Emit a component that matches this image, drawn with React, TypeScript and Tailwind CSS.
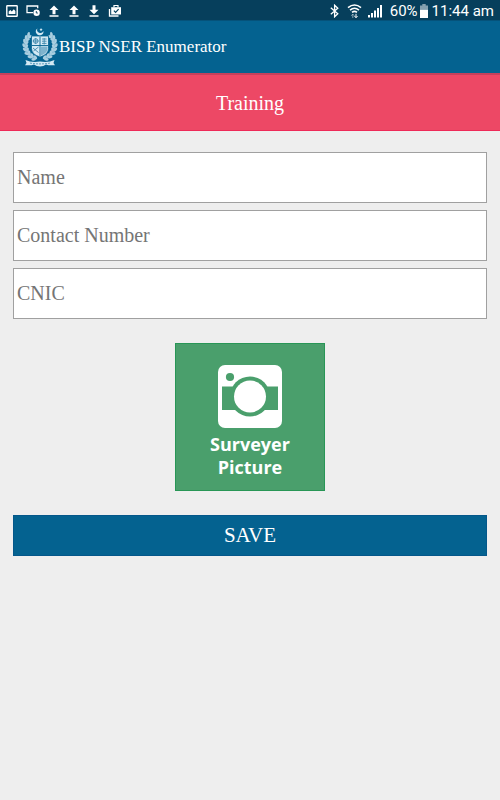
import React, {useState} from "react";

const StatusBar = () => (
  <div className="flex h-5 items-center justify-between bg-[#063f5c] px-1.5 pt-px font-['Roboto',sans-serif] text-white">
    <div className="flex items-center gap-2">
      <svg width="12" height="14" viewBox="0 0 12 14" fill="none" aria-hidden="true">
        <rect x="0.8" y="1.8" width="10.4" height="10.4" rx="0.5" stroke="white" strokeWidth="1.4" />
        <path d="M2.7 10V7.6l1.6-1.5 1.5 1.3 2-2.2 1.6 1.7V10z" fill="white" />
      </svg>
      <svg width="14" height="14" viewBox="0 0 14 14" fill="none" aria-hidden="true">
        <path d="M7 8.7H1V2h10.7v2.2" stroke="white" strokeWidth="1.3" />
        <circle cx="10.6" cy="8.7" r="3.2" fill="white" />
        <path d="M10.3 7v2h1.6" stroke="#063f5c" strokeWidth="0.9" />
      </svg>
      <ArrowIcon />
      <ArrowIcon />
      <ArrowIcon down />
      <svg width="14" height="14" viewBox="0 0 14 14" aria-hidden="true">
        <path d="M1.5 5v7h9" fill="none" stroke="white" strokeWidth="1.3" />
        <path d="M6 3.2V1.5h4v1.7" fill="none" stroke="white" strokeWidth="1.2" />
        <path d="M3.2 3.2H13v7.3H3.2z" fill="white" />
        <path d="M5.9 6.6l1.7 1.8 3-3.2" fill="none" stroke="#063f5c" strokeWidth="1.2" />
      </svg>
    </div>
    <div className="flex items-center">
      <svg width="9" height="14" viewBox="0 0 9 14" fill="none" aria-hidden="true">
        <path d="M0.8 3.8l7 6-3.2 3V1.2l3.2 3-7 6" stroke="white" strokeWidth="1.3" />
      </svg>
      <svg className="ml-2" width="15" height="16" viewBox="0 0 15 16" fill="none" aria-hidden="true">
        <path d="M1 4.6q6.5-5.2 13 0M3 7.100q4.500-3.600 9 0M5 9.400q2.500-2 5 0" stroke="white" strokeWidth="1.6" />
        <path d="M5.800 15v-3.600M4.300 12.700l1.500-1.600 1.500 1.600" stroke="white" strokeOpacity="0.5" />
        <path d="M9 10.800v3.800M7.500 13.100L9 14.700l1.500-1.600" stroke="white" />
      </svg>
      <svg className="ml-1.5" width="14" height="14" viewBox="0 0 14 14" fill="white" aria-hidden="true">
        <path d="M0 11h2v2.500H0zM3 9h2v4.500H3zM6 6.500h2v7H6zM9 4h2v9.500H9zM12 1h2v12.500h-2z" />
      </svg>
      <span className="ml-2 text-[15px] leading-5">60%</span>
      <svg className="ml-0.5" width="8" height="14" viewBox="0 0 8 14" fill="white" aria-hidden="true">
        <path d="M2.3 0h3.4v1.4H8v4.3H0V1.4h2.3z" opacity="0.5" />
        <path d="M0 5.7h8V14H0z" />
      </svg>
      <span className="ml-1 text-[15px] leading-5">11:44 am</span>
    </div>
  </div>
);

const ArrowIcon = ({down = false}: {down?: boolean}) => (
  <svg width="12" height="14" viewBox="0 0 12 14" fill="white" aria-hidden="true">
    <path
      d={
        down
          ? "M4.5 1.2h3v4.5h3L6 10.2 1.5 5.7h3zM1.5 11.3h9v1.4h-9z"
          : "M6 1.6l4.5 4.5h-3v4.2h-3V6.1h-3zM1.5 11.3h9v1.4h-9z"
      }
    />
  </svg>
);

const leaves = [
  [7.5, 7.5, 45], [5, 10.5, 35], [3.4, 14, 20], [2.8, 18, 5],
  [3.4, 22, -15], [5, 25.8, -35], [8, 29, -50], [11.6, 31.4, -65],
];

const Wreath = () => (
  <g>
    <path d="M8 7.500C1.500 14 2 27 13.500 31.500" fill="none" stroke="#a3cde2" strokeWidth="3" />
    {leaves.map(([x, y, angle]) => (
      <g key={y} transform={`translate(${x} ${y}) rotate(${angle})`}>
        <ellipse cx="-1" cy="0" rx="1.3" ry="2.3" transform="rotate(-28)" />
        <ellipse cx="2.2" cy="0.2" rx="1.3" ry="2.2" transform="rotate(28)" />
      </g>
    ))}
  </g>
);

const Emblem = () => (
  <svg width="36" height="40" viewBox="0 0 36 40" fill="#d3e9f4" role="img" aria-label="Emblem">
    <path d="M15.4 1.5A3.8 3.8 0 1 0 21.4 4 3.1 3.1 0 1 1 15.4 1.5z" />
    <path d="M19 0.8l.5 1.1 1.2.1-.9.8.3 1.2-1.1-.7-1 .7.3-1.2-.9-.8 1.2-.1z" />
    <g opacity="0.8">
      <Wreath />
      <g transform="translate(36 0) scale(-1 1)">
        <Wreath />
      </g>
    </g>
    <path d="M9.500 9h17v12.500q0 6-8.500 8.500-8.500-2.500-8.500-8.500z" stroke="#046290" strokeWidth="0.8" />
    <path d="M19 19.500h6.500v2q0 4.500-6.500 7z" fill="#7fb3cd" />
    <path d="M18 9.500V29M10 18.500h16" stroke="#046290" strokeWidth="0.9" />
    <g fill="none" stroke="#3f88ad" strokeWidth="0.9">
      <circle cx="13.700" cy="14" r="2.300" />
      <path d="M13.700 11v6M10.700 14h6M20 12h4.500M20 14.200h4.500M20 16.400h4.500M22.200 11v6.500" />
      <path d="M11 21l5.500 4.500M11.500 24l5-4" />
    </g>
    <path d="M3.500 33q6 2.800 14.500 1.500 8.500 1.300 14.500-1.500l-1 2.900 1.500 2.300q-6.500.5-9-.8-2.500 2-6 2t-6-2q-2.500 1.300-9 .8l1.500-2.300z" />
    <path d="M8 36.100q10 1.600 20 0" fill="none" stroke="#3f88ad" strokeWidth="0.8" strokeDasharray="2 1" />
  </svg>
);

const CameraIcon = () => (
  <svg width="64" height="64" viewBox="0 0 64 64" aria-hidden="true">
    <rect width="64" height="63" rx="7" fill="white" />
    <g fill="#4a9f6c">
      <circle cx="12" cy="12" r="4.1" />
      <path d="M4 21.500h56V45H4z" />
      <circle cx="32" cy="31.500" r="20" />
    </g>
    <circle cx="32" cy="31.500" r="16" fill="white" />
  </svg>
);

const fields = [
  {name: "name", label: "Name", type: "text"},
  {name: "contact", label: "Contact Number", type: "tel"},
  {name: "cnic", label: "CNIC", type: "text"},
];

const App = () => {
  const [values, setValues] = useState<Record<string, string>>({});

  const handlerChange = (e: React.ChangeEvent<HTMLInputElement>) => {
    setValues({...values, [e.target.name]: e.target.value});
  };

  return (
    <div className="min-h-screen bg-[#eeeeee] font-['Liberation_Serif',serif]">
      <StatusBar />
      <header className="flex h-[53px] items-center border-t border-[#05527a] bg-[#046290] pl-[22px] text-white">
        <Emblem />
        <h1 className="ml-px text-[17px] leading-6">BISP NSER Enumerator</h1>
      </header>
      <main>
        <h2 className="flex h-[58px] items-center justify-center border-t-2 border-b border-t-[#c5405c] border-b-[#ee2a58] bg-[#ed4865] text-xl text-white">
          Training
        </h2>
        <form
          className="flex flex-col px-[13px] pt-[21px]"
          onSubmit={(e) => e.preventDefault()}
        >
          <div className="flex flex-col gap-[7px]">
            {fields.map(({name, label, type}) => (
              <input
                key={name}
                name={name}
                type={type}
                aria-label={label}
                placeholder={label}
                value={values[name] ?? ""}
                onChange={handlerChange}
                className="h-[51px] w-full border border-[#a0a0a0] bg-white px-[3px] text-xl text-gray-800 outline-none placeholder:text-[#757575]"
              />
            ))}
          </div>
          <button
            type="button"
            className="mt-6 flex h-[148px] w-[150px] flex-col items-center self-center border border-[#289656] bg-[#4a9f6c] pt-[21px] font-['Open_Sans',sans-serif] text-lg leading-[23px] font-bold text-white"
          >
            <CameraIcon />
            <span className="mt-1">
              Surveyer
              <br />
              Picture
            </span>
          </button>
          <button
            type="submit"
            className="mt-6 h-[41px] w-full border border-[#04578a] bg-[#046290] text-[21px] text-white"
          >
            SAVE
          </button>
        </form>
      </main>
    </div>
  );
};

export default App;
